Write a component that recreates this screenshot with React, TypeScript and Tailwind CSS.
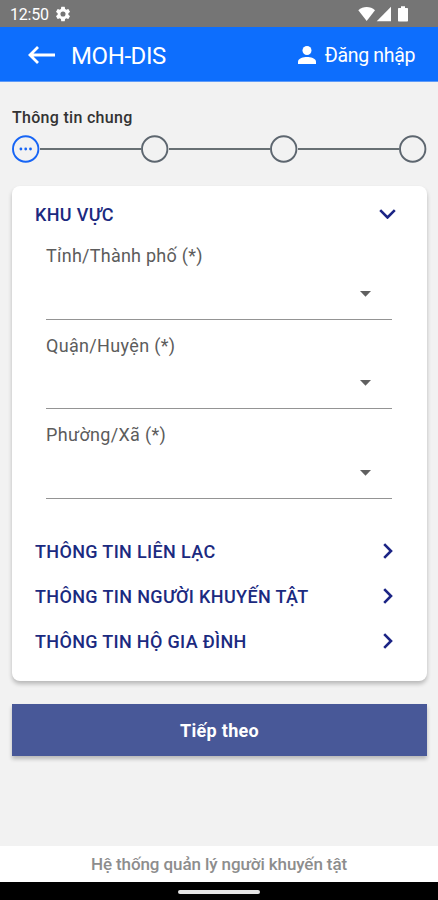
import React from "react";

function Field({ label, spacing }: { label: string; spacing: string }) {
  return (
    <div className="flex h-[89.5px] flex-col border-b-[1.5px] border-[#949494]">
      <label className={`h-[50px] pt-[14px] text-[18px] leading-[24px] text-[#5c5c5c] ${spacing}`}>{label}</label>
      <div className="flex h-[27px] items-center justify-end pr-[21px]">
        <svg width="11" height="6" viewBox="0 0 11 6" fill="#606060">
          <path d="M0 0h11L5.5 5.8z" />
        </svg>
      </div>
    </div>
  );
}

function Section({ title, spacing }: { title: string; spacing: string }) {
  return (
    <div className="flex h-[45px] items-center justify-between pl-[23px] pr-[34px]">
      <span className={`whitespace-nowrap text-[18px] leading-[24px] font-medium text-[#1b2a80] ${spacing}`}>{title}</span>
      <svg className="mb-[2px]" width="10" height="16" viewBox="0 0 10 16" fill="none" stroke="#1b2485" strokeWidth="2.6">
        <path d="M1.2 1.2L8 8l-6.8 6.8" />
      </svg>
    </div>
  );
}

function Step({ active }: { active?: boolean }) {
  return (
    <svg className="shrink-0" width="28" height="28" viewBox="0 0 28 28" fill="none">
      <circle cx="13.7" cy="14" r="12.7" stroke={active ? "#1765f5" : "#5d666f"} strokeWidth="1.9" />
      {active && (
        <g fill="#1765f5">
          <circle cx="8.9" cy="14" r="1.4" />
          <circle cx="13.7" cy="14" r="1.4" />
          <circle cx="18.5" cy="14" r="1.4" />
        </g>
      )}
    </svg>
  );
}

function Connector() {
  return <div className="h-[2px] flex-1 bg-[#687074]" />;
}

export default function App() {
  return (
    <div className="flex h-[900px] w-[438px] flex-col overflow-hidden bg-[#f2f2f2] font-['Roboto',sans-serif]">
      <div className="flex h-[27px] shrink-0 items-center justify-between bg-[#757575] pl-[10px] pr-[30px] text-white">
        <div className="flex items-center gap-[5px] pt-[2px]">
          <span className="text-[16px] leading-[20px] tracking-[-0.2px]">12:50</span>
          <svg width="18" height="18" viewBox="0 0 24 24" fill="#fff" className="mb-[1px]">
            <path d="M19.14 12.94c.04-.3.06-.61.06-.94s-.02-.64-.07-.94l2.03-1.58a.49.49 0 0 0 .12-.61l-1.92-3.32a.49.49 0 0 0-.59-.22l-2.39.96a7 7 0 0 0-1.62-.94l-.36-2.54a.48.48 0 0 0-.48-.41h-3.84a.47.47 0 0 0-.47.41l-.36 2.54c-.59.24-1.13.57-1.62.94l-2.39-.96a.48.48 0 0 0-.59.22L2.74 8.87a.47.47 0 0 0 .12.61l2.03 1.58a6 6 0 0 0-.02 1.88l-2.03 1.58a.49.49 0 0 0-.12.61l1.92 3.32c.12.22.37.29.59.22l2.39-.96c.5.38 1.03.7 1.62.94l.36 2.54c.05.24.24.41.48.41h3.84c.24 0 .44-.17.47-.41l.36-2.54a7 7 0 0 0 1.62-.94l2.39.96c.22.08.47 0 .59-.22l1.92-3.32a.47.47 0 0 0-.12-.61zM12 15.4a3.4 3.4 0 1 1 0-6.8 3.4 3.4 0 0 1 0 6.8z" />
          </svg>
        </div>
        <svg width="50" height="16" viewBox="0 0 50 16" fill="#fff">
          <path d="M.3 4.2C5-.2 12.4-.2 17 4.2L8.7 15z" />
          <path d="M33 .8v14.4H18.7z" />
          <path d="M41 2h2V.3h4V2h2c.6 0 1 .4 1 1v11.6c0 .6-.4 1-1 1h-8c-.6 0-1-.4-1-1V3c0-.6.4-1 1-1z" />
        </svg>
      </div>
      <header className="flex h-[55px] shrink-0 items-center justify-between border-b border-[#5f9bf8] bg-[#0d6efd] pl-[28px] pr-[23px] text-white">
        <div className="flex items-center gap-[15px]">
          <svg className="mt-[2px]" width="28" height="18" viewBox="0 0 28 18" fill="none" stroke="#fff" strokeWidth="2.8">
            <path d="M27 9H2M10 1L2 9l8 8" />
          </svg>
          <h1 className="pt-[3px] text-[24px] leading-[30px] font-normal tracking-[-0.4px]">MOH-DIS</h1>
        </div>
        <div className="flex items-center gap-[9px]">
          <svg className="mt-[2px]" width="18" height="18" viewBox="0 0 18 18" fill="#fff">
            <circle cx="9" cy="4.5" r="4.5" />
            <path d="M0 18v-2.5C0 12.3 5.6 11 9 11s9 1.3 9 4.5V18z" />
          </svg>
          <span className="pt-[3px] text-[19.5px] leading-[26px] tracking-[-0.35px]">Đăng nhập</span>
        </div>
      </header>
      <main className="flex flex-1 flex-col pl-[12px] pr-[11px]">
        <p className="mt-[26px] h-[20px] text-[16px] leading-[20px] font-medium tracking-[0.3px] text-[#333]">Thông tin chung</p>
        <div className="mt-[7px] flex items-center">
          <Step active />
          <Connector />
          <Step />
          <Connector />
          <Step />
          <Connector />
          <Step />
        </div>
        <section className="mt-[23px] h-[495px] rounded-[8px] bg-white shadow-[0_3px_4px_rgba(0,0,0,0.24)]">
          <div className="flex h-[44px] items-end justify-between pl-[23px] pr-[31px] pb-[3px]">
            <h2 className="text-[18px] leading-[24px] font-medium tracking-[0.35px] text-[#1b2a80]">KHU VỰC</h2>
            <svg className="mb-[8px]" width="17" height="10" viewBox="0 0 17 10" fill="none" stroke="#1b2485" strokeWidth="2.6">
              <path d="M1.2 1.2l7.3 7.3 7.3-7.3" />
            </svg>
          </div>
          <div className="ml-[34px] mr-[35px]">
            <Field label="Tỉnh/Thành phố (*)" spacing="tracking-[0.25px]" />
            <Field label="Quận/Huyện (*)" spacing="tracking-[0.33px]" />
            <Field label="Phường/Xã (*)" spacing="tracking-[0.33px]" />
          </div>
          <div className="mt-[31px]">
            <Section title="THÔNG TIN LIÊN LẠC" spacing="tracking-[0.35px]" />
            <Section title="THÔNG TIN NGƯỜI KHUYẾN TẬT" spacing="tracking-[0.36px]" />
            <Section title="THÔNG TIN HỘ GIA ĐÌNH" spacing="tracking-[0.33px]" />
          </div>
        </section>
        <button className="mt-[23px] h-[52px] bg-[#485898] text-[18px] font-bold tracking-[0.3px] text-white shadow-[0_3px_4px_rgba(0,0,0,0.24)]">
          Tiếp theo
        </button>
      </main>
      <footer className="flex h-[36px] shrink-0 items-center justify-center bg-white pt-[2px] text-[17px] font-medium tracking-[-0.1px] text-[#8d8d8d]">
        Hệ thống quản lý người khuyến tật
      </footer>
      <div className="flex h-[18px] shrink-0 items-center justify-center bg-black pt-[2px]">
        <div className="h-[4px] w-[82px] rounded-full bg-[#e4e4e4]" />
      </div>
    </div>
  );
}
